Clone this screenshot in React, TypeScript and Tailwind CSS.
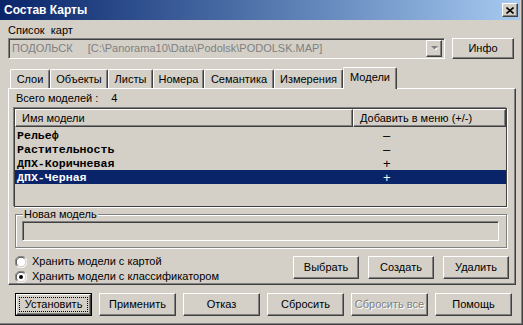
import React from "react";

const raised =
  "bg-[#d4d0c8] border border-t-white border-l-white border-r-[#404040] border-b-[#404040] shadow-[inset_-1px_-1px_#808080]";
const sunken =
  "border border-t-[#808080] border-l-[#808080] border-r-white border-b-white shadow-[inset_1px_1px_#404040,inset_-1px_-1px_#d4d0c8]";

function Btn({
  children,
  className = "",
  disabled = false,
}: {
  children: React.ReactNode;
  className?: string;
  disabled?: boolean;
}) {
  return (
    <div className={`${raised} flex items-center justify-center ${className}`}>
      <span
        className={
          disabled ? "text-[#808080] [text-shadow:1px_1px_0_#ffffff]" : ""
        }
      >
        {children}
      </span>
    </div>
  );
}

function DefaultBtn({ children }: { children: React.ReactNode }) {
  return (
    <div className="w-[77px] h-[23px] border border-black flex">
      <div className={`${raised} flex-1 flex items-center justify-center p-[2px]`}>
        <div className="w-full h-full border border-dotted border-black flex items-center justify-center">
          {children}
        </div>
      </div>
    </div>
  );
}

function Radio({ checked }: { checked?: boolean }) {
  return (
    <svg width="12" height="12" viewBox="0 0 12 12" className="shrink-0">
      <circle cx="6" cy="6" r="5" fill="#ffffff" />
      <path d="M1.8 10.2 A5.5 5.5 0 0 1 10.2 1.8" stroke="#808080" strokeWidth="1" fill="none" />
      <path d="M10.2 1.8 A5.5 5.5 0 0 1 1.8 10.2" stroke="#ffffff" strokeWidth="1" fill="none" />
      <path d="M2.6 9.4 A4.5 4.5 0 0 1 9.4 2.6" stroke="#404040" strokeWidth="1" fill="none" />
      <path d="M9.4 2.6 A4.5 4.5 0 0 1 2.6 9.4" stroke="#d4d0c8" strokeWidth="1" fill="none" />
      {checked && <circle cx="6" cy="6" r="2" fill="#000000" />}
    </svg>
  );
}

const tabs: { label: string; w: string; sel?: boolean }[] = [
  { label: "Слои", w: "w-[40px]" },
  { label: "Объекты", w: "w-[58px]" },
  { label: "Листы", w: "w-[45px]" },
  { label: "Номера", w: "w-[51px]" },
  { label: "Семантика", w: "w-[70px]" },
  { label: "Измерения", w: "w-[69px]" },
  { label: "Модели", w: "w-[54px]", sel: true },
];

const rows: { name: string; sign: string; sel?: boolean }[] = [
  { name: "Рельеф", sign: "–" },
  { name: "Растительность", sign: "–" },
  { name: "ДПХ-Коричневая", sign: "+" },
  { name: "ДПХ-Черная", sign: "+", sel: true },
];

export default function App() {
  return (
    <div className="w-[523px] h-[325px] bg-[#d4d0c8] overflow-hidden font-['Liberation_Sans',Arial,sans-serif] text-[11px] leading-[13px] text-black shadow-[inset_-1px_-1px_#404040,inset_-2px_-2px_#808080] select-none">
      {/* Title bar */}
      <div className="h-[20px] w-[520px] flex items-center justify-between bg-linear-to-r from-[#0a246a] to-[#a6caf0] pl-[4px] pr-[2px]">
        <span className="text-white font-bold text-[12px]">Состав Карты</span>
        <div className={`${raised} w-[16px] h-[14px] flex items-center justify-center`}>
          <svg width="8" height="7" viewBox="0 0 8 7">
            <path d="M0.5 0.5 L7.5 6.5 M7.5 0.5 L0.5 6.5" stroke="#000" strokeWidth="1.6" />
          </svg>
        </div>
      </div>

      <div className="pl-[8px] pt-[2px]">
        {/* Label */}
        <div className="h-[16px] leading-[16px] whitespace-pre">Список  карт</div>

        {/* Combo row */}
        <div className="flex items-center">
          <div className={`${sunken} w-[437px] h-[21px] flex items-center justify-between pl-[3px] pr-[2px] bg-[#d4d0c8]`}>
            <span className="text-[#808080] whitespace-pre">
              ПОДОЛЬСК<span className="ml-[15px]">[C:\Panorama10\Data\Podolsk\PODOLSK.MAP]</span>
            </span>
            <div className={`${raised} w-[16px] h-[17px] flex items-center justify-center`}>
              <svg width="7" height="5" viewBox="0 0 7 5">
                <path d="M1 1 L6 1 L3.5 3.6 Z" fill="#ffffff" transform="translate(1,1)" />
                <path d="M0 0 L7 0 L3.5 3.6 Z" fill="#808080" />
              </svg>
            </div>
          </div>
          <Btn className="ml-[7px] w-[62px] h-[21px]">Инфо</Btn>
        </div>

        {/* Tabs */}
        <div className="mt-[8px] h-[22px] flex items-end pl-[2px] relative z-10 -mb-[1px]">
          {tabs.map((t) =>
            t.sel ? (
              <div
                key={t.label}
                className={`${t.w} h-[22px] bg-[#d4d0c8] border-l border-t border-r border-t-white border-l-white border-r-[#404040] shadow-[inset_-1px_0_#808080] rounded-t-[2px] flex justify-center pt-[3px]`}
              >
                {t.label}
              </div>
            ) : (
              <div
                key={t.label}
                className={`${t.w} h-[19px] mb-[1px] bg-[#d4d0c8] border-l border-t border-r border-t-white border-l-white border-r-[#404040] shadow-[inset_-1px_0_#808080] rounded-t-[2px] flex justify-center pt-[3px]`}
              >
                {t.label}
              </div>
            )
          )}
        </div>

        {/* Panel */}
        <div className={`${raised} w-[508px] h-[197px] flex flex-col pl-[5px] pr-[6px] pt-[2px]`}>
          <div className="h-[14px] leading-[14px] ml-[2px] flex">
            <span>Всего моделей :</span>
            <span className="ml-[13px]">4</span>
          </div>

          {/* List */}
          <div className="mt-[3px] w-[493px] h-[99px] border border-[#404040] shadow-[-1px_-1px_0_#808080,1px_1px_0_#ffffff] bg-[#d4d0c8] flex flex-col">
            <div className="flex h-[18px] shrink-0">
              <div className={`${raised} w-[338px] h-full flex items-center pl-[6px]`}>Имя модели</div>
              <div className={`${raised} flex-1 h-full flex items-center pl-[6px]`}>Добавить в меню (+/-)</div>
            </div>
            <div className="mt-[1px] flex flex-col font-['Liberation_Mono',monospace] font-bold text-[11.6px]">
              {rows.map((r) => (
                <div
                  key={r.name}
                  className={`h-[14px] flex items-center ${r.sel ? "bg-[#0a246a] text-white" : ""}`}
                >
                  <span className="w-[337px] pl-[2px] whitespace-pre">{r.name}</span>
                  <span className="pl-[31px] font-['Liberation_Sans',sans-serif] font-normal text-[13px]">
                    {r.sign}
                  </span>
                </div>
              ))}
            </div>
          </div>

          {/* Group box */}
          <div className="relative mt-[7px] ml-[1px] w-[492px] h-[34px] border border-[#808080] shadow-[inset_1px_1px_#ffffff,1px_1px_#ffffff] pt-[6px] pl-[6px]">
            <span className="absolute -top-[7px] left-[7px] bg-[#d4d0c8] px-[1px] leading-[13px]">Новая модель</span>
            <div className={`${sunken} w-[477px] h-[20px] bg-[#d4d0c8]`} />
          </div>

          {/* Radios + buttons */}
          <div className="mt-[6px] flex justify-between">
            <div className="flex flex-col ml-[1px]">
              <div className="h-[15px] flex items-center gap-[5px]">
                <Radio />
                <span>Хранить модели с картой</span>
              </div>
              <div className="h-[15px] flex items-center gap-[5px]">
                <Radio checked />
                <span>Хранить модели с классификатором</span>
              </div>
            </div>
            <div className="mt-[2px] flex gap-[9px]">
              <Btn className="w-[66px] h-[23px]">Выбрать</Btn>
              <Btn className="w-[66px] h-[23px]">Создать</Btn>
              <Btn className="w-[66px] h-[23px]">Удалить</Btn>
            </div>
          </div>
        </div>

        {/* Bottom buttons */}
        <div className="mt-[8px] ml-[7px] flex gap-[7px]">
          <DefaultBtn>Установить</DefaultBtn>
          <Btn className="w-[77px] h-[23px]">Применить</Btn>
          <Btn className="w-[77px] h-[23px]">Отказ</Btn>
          <Btn className="w-[77px] h-[23px]">Сбросить</Btn>
          <Btn className="w-[77px] h-[23px]" disabled>
            Сбросить все
          </Btn>
          <Btn className="w-[77px] h-[23px]">Помощь</Btn>
        </div>
      </div>
    </div>
  );
}
